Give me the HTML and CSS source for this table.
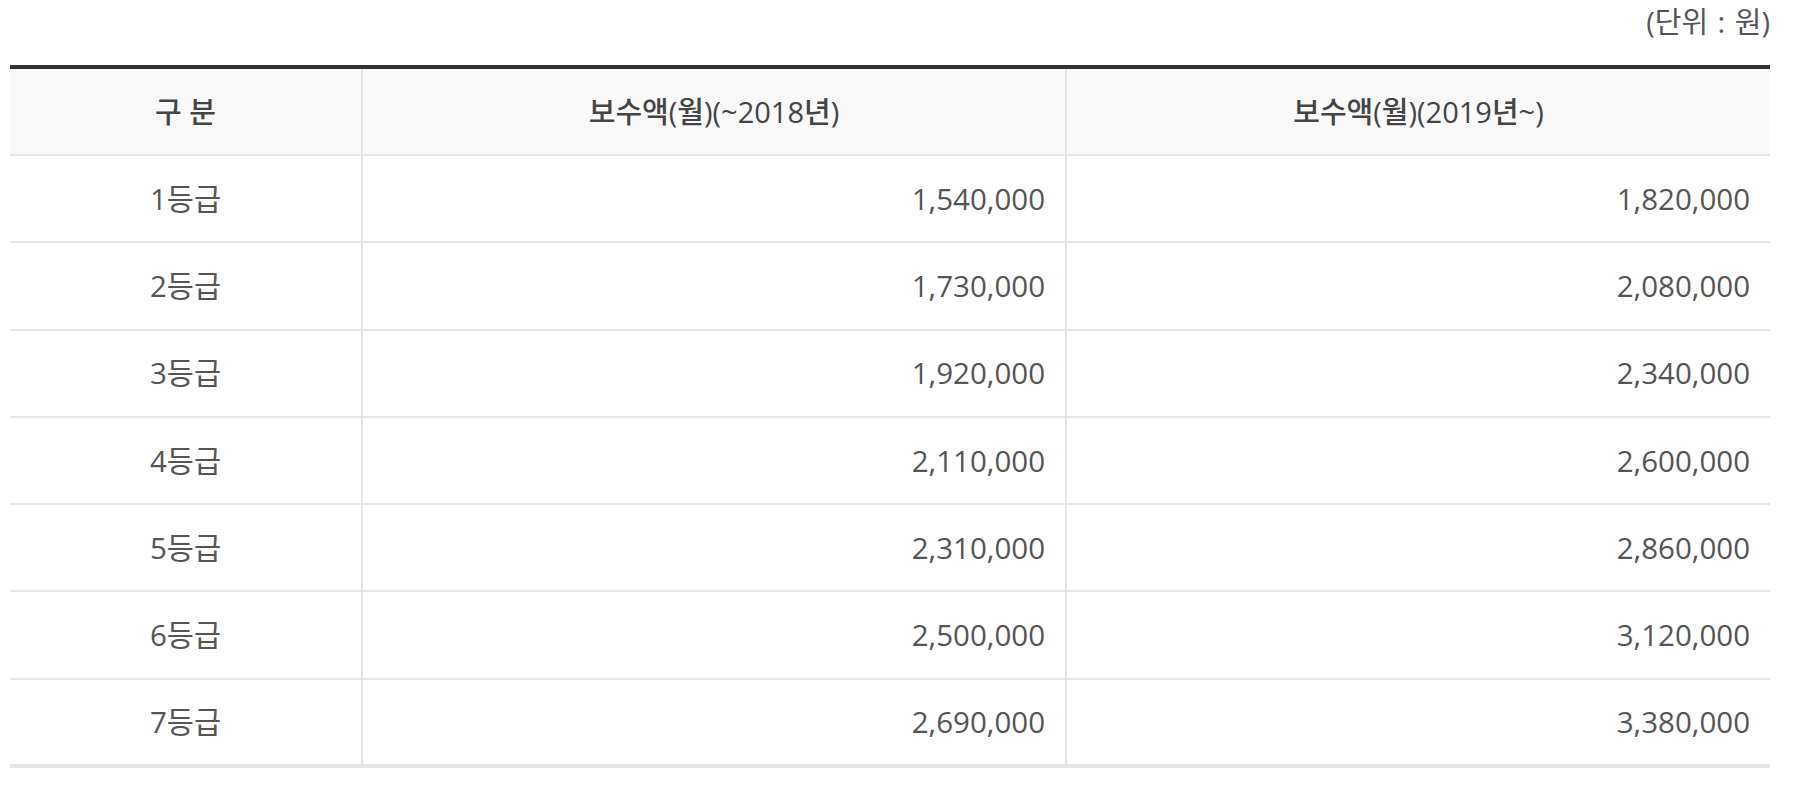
FILE: index.html
```html
<!DOCTYPE html>
<html lang="ko">
<head>
<meta charset="utf-8">
<title>보수액</title>
<link rel="stylesheet" href="styles.css">
</head>
<body>
<div class="wrap">
  <p class="unit">(단위 : 원)</p>
  <table class="pay">
    <colgroup>
      <col class="c1"><col class="c2"><col class="c3">
    </colgroup>
    <thead>
      <tr><th>구 분</th><th>보수액(월)(~2018년)</th><th>보수액(월)(2019년~)</th></tr>
    </thead>
    <tbody>
      <tr><td class="grade">1등급</td><td class="num">1,540,000</td><td class="num">1,820,000</td></tr>
      <tr><td class="grade">2등급</td><td class="num">1,730,000</td><td class="num">2,080,000</td></tr>
      <tr><td class="grade">3등급</td><td class="num">1,920,000</td><td class="num">2,340,000</td></tr>
      <tr><td class="grade">4등급</td><td class="num">2,110,000</td><td class="num">2,600,000</td></tr>
      <tr><td class="grade">5등급</td><td class="num">2,310,000</td><td class="num">2,860,000</td></tr>
      <tr><td class="grade">6등급</td><td class="num">2,500,000</td><td class="num">3,120,000</td></tr>
      <tr><td class="grade">7등급</td><td class="num">2,690,000</td><td class="num">3,380,000</td></tr>
    </tbody>
  </table>
</div>
</body>
</html>
```
FILE: styles.css
```css
html, body {
  margin: 0;
  padding: 0;
  background: #fff;
}
body {
  font-family: "Open Sans", "Noto Sans CJK KR", sans-serif;
  color: #555;
}
.wrap {
  width: 1760px;
  padding: 0 0 0 10px;
}
.unit {
  margin: 0 0 21px;
  height: 44px;
  line-height: 44px;
  text-align: right;
  font-size: 29px;
  word-spacing: 2px;
  color: #555;
}
.pay {
  width: 1760px;
  border-collapse: collapse;
  table-layout: fixed;
  border-top: 4px solid #333;
  border-bottom: 4px solid #e5e5e5;
}
.c1 { width: 352px; }
.c2 { width: 704px; }
.c3 { width: 704px; }
.pay th,
.pay td {
  height: 87.3px;
  padding: 0 20px;
  border: 2px solid #e5e5e5;
  font-size: 29.5px;
  line-height: 40px;
  box-sizing: border-box;
}
.pay th:first-child,
.pay td:first-child { border-left: none; }
.pay th:last-child,
.pay td:last-child { border-right: none; }
.pay thead tr th { border-top: none; }
.pay th {
  height: 88px;
  background: #f9f9f9;
  font-weight: 500;
  font-size: 29px;
  color: #444;
  text-align: center;
}
.pay td.grade { text-align: center; }
.pay td.num { text-align: right; }
```
